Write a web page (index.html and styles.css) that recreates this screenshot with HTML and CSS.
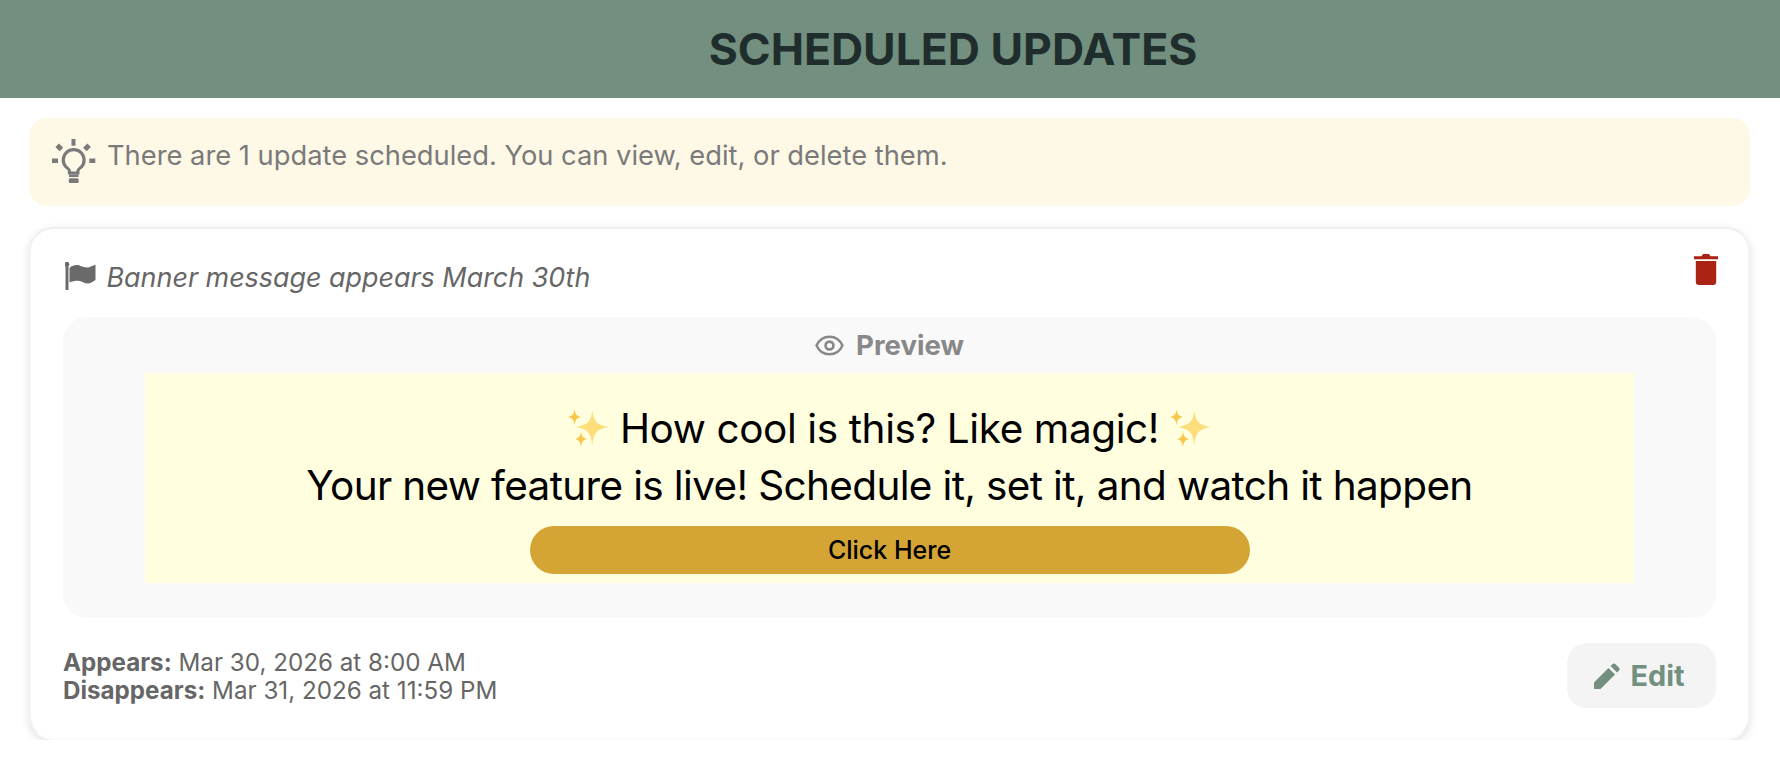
FILE: index.html
```html
<!DOCTYPE html>
<html lang="en">
  <head>
    <meta charset="UTF-8" />
    <title>Scheduled Updates</title>
    <link rel="stylesheet" href="styles.css">
  </head>
  <body>
    <header class="page-header">
      <h1>SCHEDULED UPDATES</h1>
    </header>
    <main class="content">
      <div class="notice">
        <svg class="notice-icon" viewBox="0 0 44 44">
          <g fill="#7a7a7a">
            <rect x="19.500" y="0" width="4" height="6.700"/>
            <rect x="0" y="19.500" width="6" height="4.500"/>
            <rect x="37.300" y="19.500" width="6" height="4.500"/>
            <rect x="4.300" y="5.800" width="6" height="5" transform="rotate(45 7.300 8.300)"/>
            <rect x="32" y="5.800" width="6" height="5" transform="rotate(-45 35 8.300)"/>
            <rect x="17" y="35.500" width="9.500" height="2.500"/>
            <rect x="16.700" y="39.300" width="10" height="4.700" rx="1.500"/>
          </g>
          <path d="M17.500 34v-2c0-1.500-1.500-2.400-3.800-4.400a10.400 10.400 0 1 1 16 0c-2.300 2-3.800 2.900-3.800 4.400v2z" fill="none" stroke="#7a7a7a" stroke-width="3.200"/>
        </svg>
        <span>There are 1 update scheduled. You can view, edit, or delete them.</span>
      </div>

      <section class="card">
        <div class="card-top">
          <div class="card-title">
            <svg class="flag-icon" viewBox="0 0 32 28">
              <path d="M.5 2h3v26h-3z" fill="#6a6a6a"/>
              <circle cx="2" cy="2.200" r="2.300" fill="#6a6a6a"/>
              <path d="M4.500 6c3-3 7-3.500 10-2.500s7 3 10 1.500c2-.7 4.500-1.500 6-2.500v15.500c-2 1.500-5 3-7 3.500-3 .7-7-2.500-10-2.700-3-.2-6 .5-9 1.500z" fill="#6a6a6a"/>
            </svg>
            <em>Banner message appears March 30th</em>
          </div>
          <button class="delete-btn" type="button" aria-label="Delete">
            <svg viewBox="0 0 24 31">
              <path d="M0 2.300h7.500L9 0h6l1.500 2.300H24v3H0z" fill="#ab2315"/>
              <path d="M1.800 7h20.400v21c0 1.700-1.300 3-3 3H4.800c-1.700 0-3-1.300-3-3z" fill="#ab2315"/>
            </svg>
          </button>
        </div>

        <div class="preview">
          <div class="preview-label">
            <svg viewBox="0 0 28 20">
              <path d="M14 1.500C8 1.500 3.500 5.500 1.500 10c2 4.500 6.500 8.500 12.500 8.500S24.500 14.500 26.500 10C24.500 5.500 20 1.500 14 1.500z" fill="none" stroke="#888" stroke-width="2.400"/>
              <circle cx="14" cy="10" r="3.800" fill="none" stroke="#888" stroke-width="2.600"/>
            </svg>
            <span>Preview</span>
          </div>
          <div class="banner">
            <p class="banner-line">
              <svg class="sparkles" viewBox="0 0 41 39">
                <path d="M24.300 1c1 11 4.500 15 16.700 17-12.200 2-15.700 6-16.700 19-1-13-4.500-17-16.700-19 12.200-2 15.700-6 16.700-17z" fill="#fdde7c"/>
                <path d="M6.500 0c.5 5 2 7 6.500 8-4.500 1-6 3-6.500 9-.5-6-2-8-6.500-9 4.500-1 6-3 6.500-8z" fill="#f8c84e"/>
                <path d="M13 22c.4 5 2 7 6 8-4 1-5.600 3-6 9-.4-6-2-8-6-9 4-1 5.600-3 6-8z" fill="#f8c84e"/>
              </svg>
              How cool is this? Like magic!
              <svg class="sparkles" viewBox="0 0 41 39">
                <path d="M24.300 1c1 11 4.500 15 16.700 17-12.200 2-15.700 6-16.700 19-1-13-4.500-17-16.700-19 12.200-2 15.700-6 16.700-17z" fill="#fdde7c"/>
                <path d="M6.500 0c.5 5 2 7 6.500 8-4.500 1-6 3-6.500 9-.5-6-2-8-6.500-9 4.500-1 6-3 6.500-8z" fill="#f8c84e"/>
                <path d="M13 22c.4 5 2 7 6 8-4 1-5.600 3-6 9-.4-6-2-8-6-9 4-1 5.600-3 6-8z" fill="#f8c84e"/>
              </svg>
            </p>
            <p class="banner-line banner-line-long">Your new feature is live! Schedule it, set it, and watch it happen</p>
            <a class="banner-btn">Click Here</a>
          </div>
        </div>

        <div class="card-bottom">
          <div class="dates">
            <div><strong>Appears:</strong> Mar 30, 2026 at 8:00 AM</div>
            <div><strong>Disappears:</strong> Mar 31, 2026 at 11:59 PM</div>
          </div>
          <button class="edit-btn" type="button">
            <svg viewBox="0 0 26 26">
              <path d="M0 26v-6.500L14.500 5l6.500 6.500L6.500 26z" fill="#728f7f"/>
              <path d="M16.500 3l2-2c.8-.8 2-.8 2.800 0l3.700 3.700c.8.800.8 2 0 2.800l-2 2z" fill="#728f7f"/>
            </svg>
            <span>Edit</span>
          </button>
        </div>
      </section>
    </main>
  </body>
</html>
```

FILE: styles.css
```css
* {
  box-sizing: border-box;
}

body {
  margin: 0;
  padding: 0;
  background-color: #fff;
  font-family: "Inter", "Liberation Sans", sans-serif;
}

.page-header {
  height: 98px;
  padding-left: 126px;
  display: flex;
  align-items: center;
  justify-content: center;
  background-color: #728f7f;
}

.page-header h1 {
  margin: 0;
  font-size: 44.5px;
  font-weight: 700;
  color: #1f2e2c;
}

.content {
  padding: 20px 30px 0 29px;
}

.notice {
  height: 88px;
  padding: 21px 23px;
  display: flex;
  align-items: flex-start;
  gap: 11px;
  background-color: #fef8e6;
  border-radius: 18px;
  font-size: 27.3px;
  color: #7a7a7a;
}

.notice-icon {
  width: 44px;
  height: 44px;
  flex-shrink: 0;
}

.card {
  margin-top: 21px;
  height: 513px;
  padding: 0 32px;
  background-color: #fff;
  border: 2px solid #f3f3f3;
  border-top-color: #efefef;
  border-bottom-color: #fbfbfb;
  border-radius: 24px;
  box-shadow: 0 3px 10px rgba(0, 0, 0, 0.12);
}

.card-top {
  height: 88px;
  display: flex;
  justify-content: space-between;
}

.card-title {
  padding-top: 32px;
  display: flex;
  align-items: flex-start;
  gap: 10px;
  font-size: 26.9px;
  color: #666;
}

.flag-icon {
  width: 32px;
  height: 28px;
  margin-top: 1px;
  margin-left: 1.5px;
}

.delete-btn {
  margin: 25px -2px 0 0;
  padding: 0;
  width: 24px;
  height: 31px;
  border: none;
  background: none;
}

.delete-btn svg {
  display: block;
}

.preview {
  height: 301px;
  padding: 0 82px;
  background-color: #f9f9f9;
  border-radius: 24px;
}

.preview-label {
  height: 56px;
  display: flex;
  align-items: center;
  justify-content: center;
  gap: 12px;
  font-size: 27.6px;
  font-weight: 700;
  color: #888;
}

.preview-label svg {
  width: 29px;
  height: 21px;
}

.banner {
  height: 210px;
  padding-top: 27px;
  display: flex;
  flex-direction: column;
  align-items: center;
  background-color: #ffffe0;
  color: #000;
}

.banner-line {
  margin: 0;
  height: 57px;
  display: flex;
  align-items: center;
  gap: 11px;
  font-size: 40.5px;
  letter-spacing: -0.4px;
  white-space: nowrap;
}

.banner-line-long {
  letter-spacing: -0.65px;
}

.sparkles {
  width: 41px;
  height: 39px;
}

.banner-btn {
  margin-top: 12px;
  width: 720px;
  height: 48px;
  display: flex;
  align-items: center;
  justify-content: center;
  background-color: #d4a435;
  border-radius: 24px;
  font-size: 25px;
  font-weight: 500;
  color: #000;
}

.card-bottom {
  margin-top: 25px;
  display: flex;
  justify-content: space-between;
}

.dates {
  padding-top: 6px;
  font-size: 24.2px;
  line-height: 28px;
  color: #666;
}

.edit-btn {
  width: 149px;
  height: 65px;
  padding: 0 5px 0 0;
  display: flex;
  align-items: center;
  justify-content: center;
  gap: 11px;
  border: none;
  border-radius: 20px;
  background-color: #f4f4f4;
  font-family: inherit;
  font-size: 28.8px;
  font-weight: 700;
  color: #728f7f;
}

.edit-btn svg {
  width: 26px;
  height: 26px;
}
```
